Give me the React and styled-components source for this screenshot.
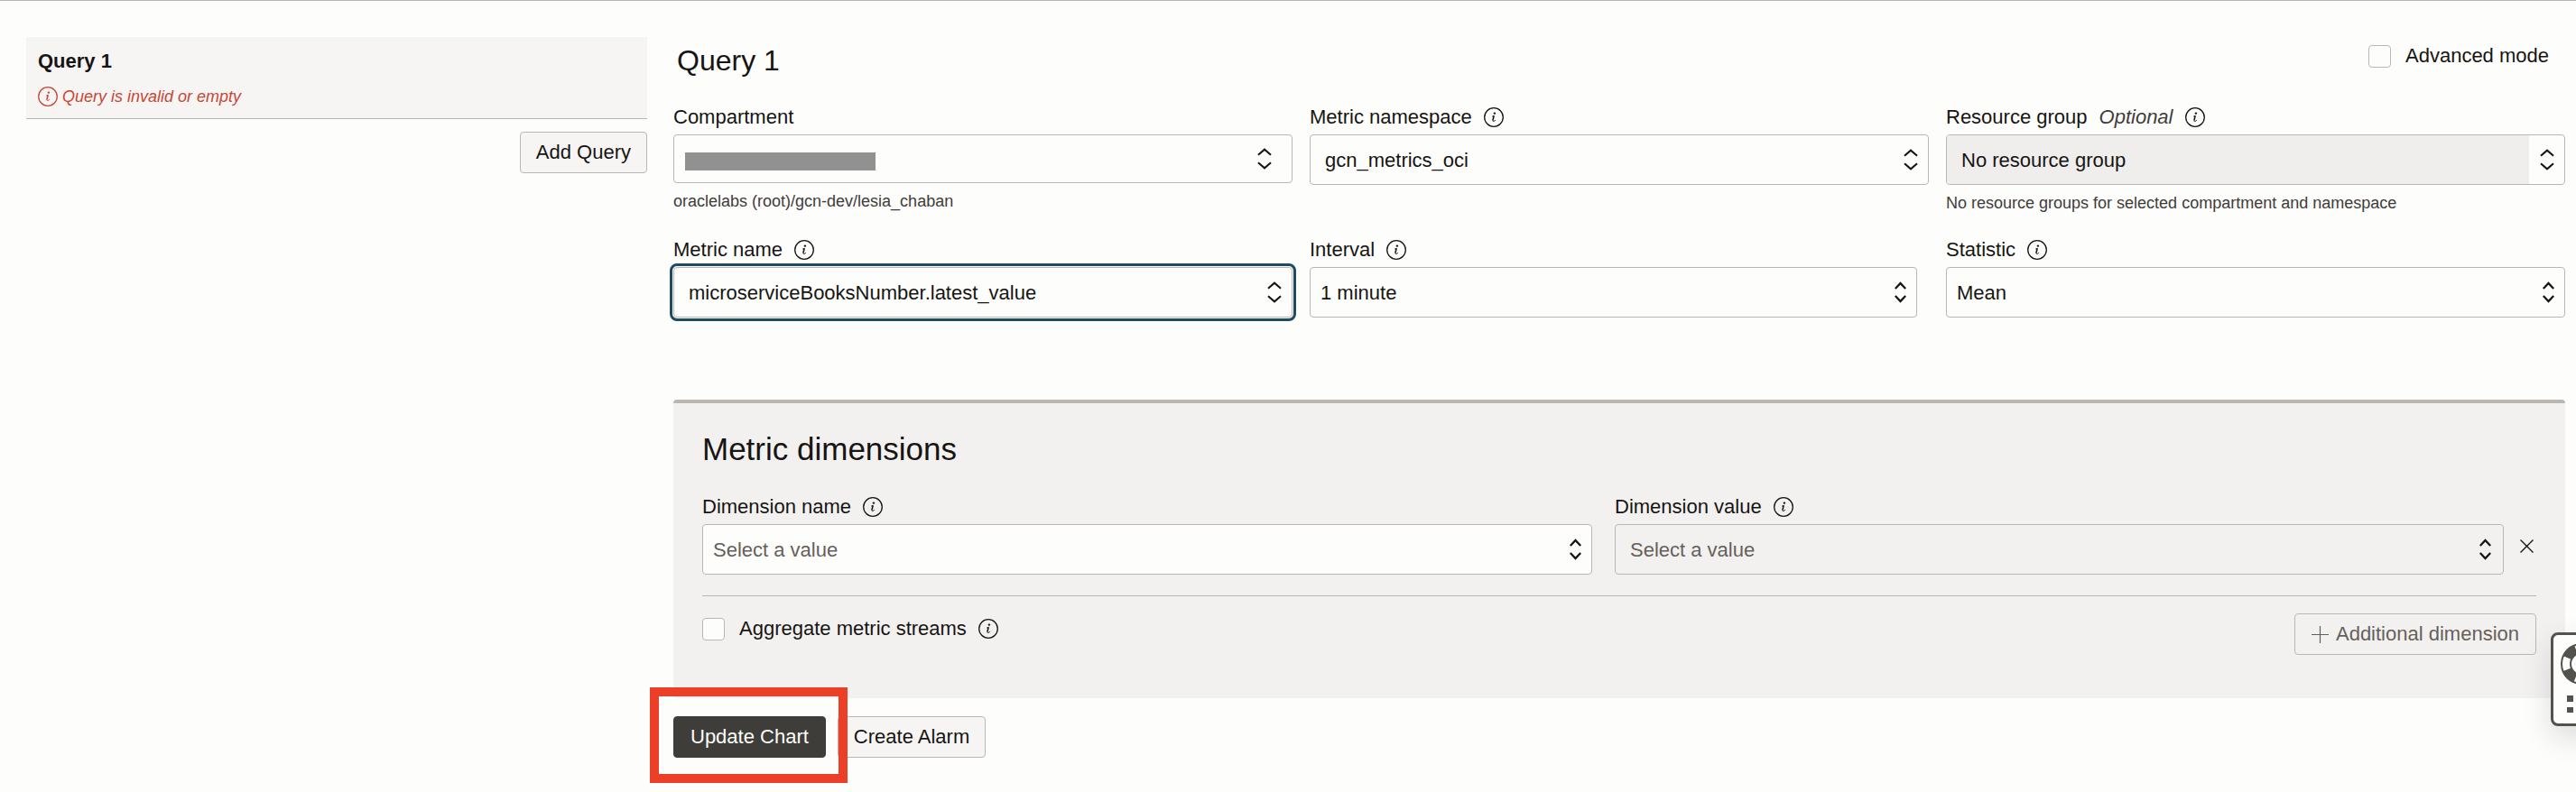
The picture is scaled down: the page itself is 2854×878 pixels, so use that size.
import React from "react";
import styled, { createGlobalStyle, css } from "styled-components";

const color = {
  page: "#fdfdfb",
  ink: "#161513",
  muted: "#66605b",
  soft: "#3f3c3a",
  line: "#bcb6b1",
  panel: "#f3f1f0",
  disabled: "#f0eeec",
  button: "#f6f5f4",
  primary: "#3e3d3a",
  focus: "#1f4a63",
  error: "#c74634",
  callout: "#eb4027",
  support: "#54524d",
};

const GlobalStyle = createGlobalStyle`
  *, *::before, *::after { box-sizing: border-box; }
  body {
    margin: 0;
    background: ${color.page};
    color: ${color.ink};
    font: 22px/28px "Liberation Sans", Arial, sans-serif;
  }
  button, input, select { font: inherit; color: inherit; margin: 0; }
  h1, h2, h3, p { margin: 0; font-weight: 400; }
`;

const Page = styled.div`
  display: grid;
  grid-template-columns: minmax(0, 43fr) minmax(0, 131fr);
  column-gap: 29px;
  align-items: start;
  padding: 0 12px 38px 29px;
  border-top: 1px solid ${color.line};
`;

const Sidebar = styled.aside`
  display: flex;
  flex-direction: column;
  align-items: flex-end;
  gap: 14px;
  padding-top: 40px;
`;

const QueryCard = styled.section`
  display: flex;
  flex-direction: column;
  gap: 13px;
  width: 100%;
  padding: 13px 13px 12px;
  background: ${color.button};
  border-bottom: 1px solid ${color.line};
`;

const QueryName = styled.h3`
  font-size: 22px;
  font-weight: 700;
`;

const ErrorText = styled.p`
  display: flex;
  align-items: center;
  gap: 5px;
  color: ${color.error};
  font-size: 18px;
  font-style: italic;
  line-height: 24px;
`;

const Main = styled.main`
  padding-top: 47px;
`;

const Header = styled.header`
  display: flex;
  justify-content: space-between;
  align-items: flex-start;
  padding: 0 18px 0 4px;
  margin-bottom: 31px;
`;

const Title = styled.h1`
  font-size: 32px;
  line-height: 38px;
`;

const CheckLabel = styled.label`
  display: flex;
  align-items: center;
  gap: 16px;
`;

const Checkbox = styled.input.attrs({ type: "checkbox" })`
  appearance: none;
  width: 25px;
  height: 25px;
  border: 1px solid ${color.line};
  border-radius: 4px;
  background: ${color.page};
  &:checked { background: ${color.primary}; }
`;

const FieldGrid = styled.div`
  display: grid;
  grid-template-columns: repeat(3, minmax(0, 1fr));
  gap: 27px 19px;
  align-items: start;
`;

const FieldBox = styled.div`
  display: flex;
  flex-direction: column;
  padding-right: ${(p) => (p.$short ? "13px" : "0")};
`;

const FieldLabel = styled.label`
  display: flex;
  align-items: center;
  gap: 13px;
  align-self: flex-start;
  margin-bottom: 6px;
  line-height: 26px;
`;

const Optional = styled.span`
  color: ${color.soft};
  font-style: italic;
`;

const Help = styled.p`
  margin-top: 8px;
  color: ${color.soft};
  font-size: 18px;
  line-height: 24px;
`;

const boxed = css`
  width: 100%;
  border: 1px solid ${color.line};
  border-radius: 4px;
  background: ${color.page};
`;

const Combo = styled.div`
  ${boxed}
  display: flex;
  height: 56px;
  overflow: hidden;
  ${(p) => p.$tinted && css`background: ${color.panel};`}
  ${(p) =>
    p.$focused &&
    css`
      outline: 3px solid ${color.focus};
      outline-offset: 1px;
    `}
`;

const ComboInput = styled.input`
  flex: 1;
  min-width: 0;
  padding: 1px 0 0 16px;
  border: 0;
  outline: 0;
  background: ${(p) => (p.$disabled ? color.disabled : "transparent")};
  &::placeholder { color: ${color.muted}; opacity: 1; }
`;

const ComboToggle = styled.button`
  display: flex;
  align-items: center;
  justify-content: center;
  width: 39px;
  padding: 0;
  border: 0;
  background: transparent;
`;

const Picker = styled.button`
  ${boxed}
  display: flex;
  align-items: center;
  justify-content: space-between;
  height: 54px;
  padding: 0 22px 0 12px;
`;

const Redaction = styled.span`
  align-self: flex-end;
  width: 211px;
  height: 20px;
  margin-bottom: 13px;
  background: #919191;
`;

const SelectWrap = styled.div`
  display: grid;
  align-items: center;
  > * { grid-area: 1 / 1; }
  > svg { justify-self: end; margin-right: 12px; pointer-events: none; }
`;

const Select = styled.select`
  ${boxed}
  appearance: none;
  height: 56px;
  padding: 1px 40px 0 11px;
  color: ${(p) => (p.$placeholder ? color.muted : color.ink)};
`;

const Button = styled.button`
  display: inline-flex;
  align-items: center;
  gap: 8px;
  height: 46px;
  padding: 0 17px;
  border: 1px solid ${color.line};
  border-radius: 4px;
  background: ${color.button};
  white-space: nowrap;
  ${(p) =>
    p.$variant === "primary" &&
    css`
      padding: 0 18px;
      border-color: ${color.primary};
      background: ${color.primary};
      color: ${color.page};
    `}
  ${(p) =>
    p.$variant === "quiet" &&
    css`
      padding: 0 18px;
      background: transparent;
      color: ${color.muted};
    `}
`;

const Panel = styled.section`
  margin-top: 91px;
  padding: 31px 32px 48px;
  border-top: 4px solid ${color.line};
  border-radius: 4px;
  background: ${color.panel};
`;

const PanelTitle = styled.h2`
  margin-bottom: 31px;
  font-size: 35px;
  line-height: 40px;
`;

const DimensionRow = styled.div`
  display: grid;
  grid-template-columns: minmax(0, 1fr) minmax(0, 1fr) 36px;
  align-items: end;
  padding-bottom: 23px;
  border-bottom: 1px solid ${color.line};
  > :first-child { margin-right: 12px; }
  > :nth-child(2) { margin-left: 13px; }
`;

const RemoveButton = styled.button`
  display: flex;
  align-items: center;
  justify-content: flex-end;
  height: 56px;
  padding: 0 3px 8px 0;
  border: 0;
  background: transparent;
`;

const PanelFooter = styled.div`
  display: flex;
  justify-content: space-between;
  align-items: flex-start;
  padding-top: 19px;
`;

const AggregateOption = styled.div`
  display: flex;
  align-items: center;
  gap: 13px;
  padding-top: 3px;
`;

const Actions = styled.div`
  display: flex;
  gap: 13px;
  margin-top: 20px;
`;

const Highlight = styled.div`
  position: relative;
  &::after {
    content: "";
    position: absolute;
    z-index: 1;
    inset: -32px -24px -28px -26px;
    border: 10px solid ${color.callout};
    pointer-events: none;
  }
`;

const SupportWidget = styled.button`
  position: fixed;
  top: 701px;
  right: -40px;
  display: flex;
  flex-direction: column;
  align-items: center;
  gap: 12px;
  width: 68px;
  height: 104px;
  padding: 9px 0 0;
  border: 3px solid ${color.support};
  border-radius: 8px;
  background: ${color.page};
  box-shadow: 0 12px 32px rgba(22, 21, 40, 0.14);
`;

function InfoIcon() {
  return (
    <svg width="22" height="22" viewBox="0 0 22 22" fill="none" stroke="currentColor" aria-hidden="true">
      <circle cx="11" cy="11" r="10.3" strokeWidth="1.3" />
      <circle cx="11.9" cy="6.6" r="1.2" fill="currentColor" stroke="none" />
      <path d="M9 10.2 L11.3 9.2" strokeWidth="0.8" />
      <path d="M11.2 9.3 L9.9 14.4" strokeWidth="1.6" />
      <path d="M9.9 14.2 C9.6 16.2 11.8 15.8 12.8 13.9" strokeWidth="1" />
    </svg>
  );
}

function Chevrons({ narrow }) {
  return narrow ? (
    <svg width="13" height="24" viewBox="0 0 13 24" fill="none" stroke={color.ink} strokeWidth="2.3" aria-hidden="true">
      <path d="M0.8 8 L6.5 2 L12.2 8 M0.8 16 L6.5 22 L12.2 16" />
    </svg>
  ) : (
    <svg width="16" height="24" viewBox="0 0 16 24" fill="none" stroke={color.ink} strokeWidth="2.1" aria-hidden="true">
      <path d="M1 7.7 L8 1.7 L15 7.7 M1 16.3 L8 22.3 L15 16.3" />
    </svg>
  );
}

function PlusIcon() {
  return (
    <svg width="19" height="19" viewBox="0 0 19 19" stroke="currentColor" strokeWidth="1.2" aria-hidden="true">
      <path d="M9.5 0 V19 M0 9.5 H19" />
    </svg>
  );
}

function CloseIcon() {
  return (
    <svg width="15" height="15" viewBox="0 0 15 15" stroke={color.ink} strokeWidth="1.3" aria-hidden="true">
      <path d="M0.5 0.5 L14.5 14.5 M14.5 0.5 L0.5 14.5" />
    </svg>
  );
}

function LifebuoyIcon() {
  return (
    <svg width="46" height="46" viewBox="0 0 46 46" fill="none" stroke={color.support} aria-hidden="true">
      <circle cx="23" cy="23" r="17" strokeWidth="11" strokeDasharray="13.35 13.35" strokeDashoffset="-6.68" />
      <circle cx="23" cy="23" r="22" strokeWidth="2" />
      <circle cx="23" cy="23" r="12" strokeWidth="2" />
    </svg>
  );
}

function GripIcon() {
  return (
    <svg width="32" height="20" viewBox="0 0 32 20" fill={color.support} aria-hidden="true">
      <path d="M0 0h7v7H0zM13 0h7v7h-7zM25 0h7v7h-7zM0 13h7v6H0zM13 13h7v6h-7zM25 13h7v6h-7z" />
    </svg>
  );
}

function Field({ id, label, optional, info = true, help, short, children }) {
  return (
    <FieldBox $short={short}>
      <FieldLabel htmlFor={id}>
        {label}
        {optional && <Optional>Optional</Optional>}
        {info && <InfoIcon />}
      </FieldLabel>
      {children}
      {help && <Help>{help}</Help>}
    </FieldBox>
  );
}

function ComboBox({ id, value, placeholder, disabled, focused, tinted, narrow, label }) {
  return (
    <Combo $focused={focused} $tinted={tinted}>
      <ComboInput id={id} type="text" defaultValue={value} placeholder={placeholder} $disabled={disabled} readOnly={disabled} />
      <ComboToggle type="button" aria-label={`Show options for ${label}`}>
        <Chevrons narrow={narrow} />
      </ComboToggle>
    </Combo>
  );
}

function SelectBox({ id, option, placeholder }) {
  return (
    <SelectWrap>
      <Select id={id} $placeholder={placeholder}>
        <option>{option}</option>
      </Select>
      <Chevrons narrow />
    </SelectWrap>
  );
}

export default function App() {
  return (
    <>
      <GlobalStyle />
      <Page>
        <Sidebar>
          <QueryCard>
            <QueryName>Query 1</QueryName>
            <ErrorText>
              <InfoIcon />
              Query is invalid or empty
            </ErrorText>
          </QueryCard>
          <Button type="button">Add Query</Button>
        </Sidebar>

        <Main>
          <Header>
            <Title>Query 1</Title>
            <CheckLabel>
              <Checkbox />
              Advanced mode
            </CheckLabel>
          </Header>

          <FieldGrid>
            <Field id="compartment" label="Compartment" info={false} help="oraclelabs (root)/gcn-dev/lesia_chaban">
              <Picker id="compartment" type="button">
                <Redaction />
                <Chevrons />
              </Picker>
            </Field>
            <Field id="namespace" label="Metric namespace">
              <ComboBox id="namespace" label="Metric namespace" value="gcn_metrics_oci" />
            </Field>
            <Field
              id="resource-group"
              label="Resource group"
              optional
              help="No resource groups for selected compartment and namespace"
            >
              <ComboBox id="resource-group" label="Resource group" value="No resource group" disabled />
            </Field>
            <Field id="metric-name" label="Metric name">
              <ComboBox id="metric-name" label="Metric name" value="microserviceBooksNumber.latest_value" focused />
            </Field>
            <Field id="interval" label="Interval" short>
              <SelectBox id="interval" option="1 minute" />
            </Field>
            <Field id="statistic" label="Statistic">
              <SelectBox id="statistic" option="Mean" />
            </Field>
          </FieldGrid>

          <Panel>
            <PanelTitle>Metric dimensions</PanelTitle>
            <DimensionRow>
              <Field id="dimension-name" label="Dimension name">
                <SelectBox id="dimension-name" option="Select a value" placeholder />
              </Field>
              <Field id="dimension-value" label="Dimension value">
                <ComboBox id="dimension-value" label="Dimension value" placeholder="Select a value" tinted narrow />
              </Field>
              <RemoveButton type="button" aria-label="Remove dimension">
                <CloseIcon />
              </RemoveButton>
            </DimensionRow>
            <PanelFooter>
              <AggregateOption>
                <CheckLabel>
                  <Checkbox />
                  Aggregate metric streams
                </CheckLabel>
                <InfoIcon />
              </AggregateOption>
              <Button type="button" $variant="quiet">
                <PlusIcon />
                Additional dimension
              </Button>
            </PanelFooter>
          </Panel>

          <Actions>
            <Highlight>
              <Button type="button" $variant="primary">Update Chart</Button>
            </Highlight>
            <Button type="button">Create Alarm</Button>
          </Actions>
        </Main>
      </Page>
      <SupportWidget type="button" aria-label="Support">
        <LifebuoyIcon />
        <GripIcon />
      </SupportWidget>
    </>
  );
}
